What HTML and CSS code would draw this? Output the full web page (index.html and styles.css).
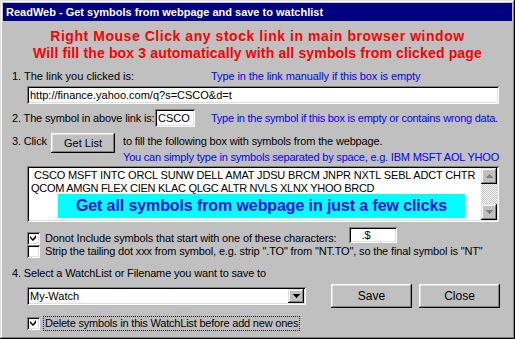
FILE: index.html
```html
<!DOCTYPE html>
<html>
<head>
<meta charset="utf-8">
<link rel="stylesheet" href="styles.css">
</head>
<body>
<div class="window">
  <div class="titlebar">ReadWeb - Get symbols from webpage and save to watchlist</div>
  <div class="content">
    <div class="header">
      <div class="h1">Right Mouse Click any stock link in main browser window</div>
      <div class="h2">Will fill the box 3 automatically with all symbols from clicked page</div>
    </div>

    <div class="row row1">
      <span class="lbl lbl1">1. The link you clicked is:</span>
      <span class="hint hint1">Type in the link manually if this box is empty</span>
    </div>
    <div class="field field-link">http://finance.yahoo.com/q?s=CSCO&amp;d=t</div>

    <div class="row row2">
      <span class="lbl lbl2">2. The symbol in above link is:</span>
      <span class="field field-sym">CSCO</span>
      <span class="hint">Type in the symbol if this box is empty or contains wrong data.</span>
    </div>

    <div class="row row3">
      <span class="lbl lbl3">3. Click</span>
      <span class="btn btn-get">Get List</span>
      <div class="row3-text">
        <div>to fill the following box with symbols from the webpage.</div>
        <div class="hint hint3">You can simply type in symbols separated by space, e.g. IBM MSFT AOL YHOO</div>
      </div>
    </div>

    <div class="memo">
      <div class="memo-text">
        <div class="line l1">&nbsp;CSCO MSFT INTC ORCL SUNW DELL AMAT JDSU BRCM JNPR NXTL SEBL ADCT CHTR</div>
        <div class="line l2">QCOM AMGN FLEX CIEN KLAC QLGC ALTR NVLS XLNX YHOO BRCD</div>
        <div class="banner">Get all symbols from webpage in just a few clicks</div>
      </div>
      <div class="scroll">
        <span class="sbtn"><svg width="7" height="4" viewBox="0 0 7 4"><path d="M3 0h1v1h1v1h1v1h1v1H0V3h1V2h1V1h1z" fill="#808080"/></svg></span>
        <span class="track"></span>
        <span class="sbtn"><svg width="7" height="4" viewBox="0 0 7 4"><path d="M0 0h7v1H6v1H5v1H4v1H3V3H2V2H1V1H0z" fill="#808080"/></svg></span>
      </div>
    </div>

    <div class="check check1">
      <span class="box"><svg width="7" height="7" viewBox="0 0 7 7"><path d="M6 0v3L3 6 0 3V1l3 3z" fill="#000"/></svg></span>
      <span class="clabel">Donot Include symbols that start with one of these characters:</span>
      <span class="field field-chars">.$</span>
    </div>
    <div class="check check2">
      <span class="box"></span>
      <span class="clabel">Strip the tailing dot xxx from symbol, e.g. strip ".TO" from "NT.TO", so the final symbol is "NT"</span>
    </div>

    <div class="row row4">4. Select a WatchList or Filename you want to save to</div>

    <div class="bottom">
      <div class="select">
        <span class="select-val">My-Watch</span>
        <span class="sbtn dd"><svg width="7" height="4" viewBox="0 0 7 4"><path d="M0 0h7v1H6v1H5v1H4v1H3V3H2V2H1V1H0z" fill="#000"/></svg></span>
      </div>
      <span class="btn btn-big">Save</span>
      <span class="btn btn-big">Close</span>
    </div>

    <div class="check check3">
      <span class="box"><svg width="7" height="7" viewBox="0 0 7 7"><path d="M6 0v3L3 6 0 3V1l3 3z" fill="#000"/></svg></span>
      <span class="clabel focus">Delete symbols in this WatchList before add new ones</span>
    </div>
  </div>
</div>
</body>
</html>
```
FILE: styles.css
```css
html, body {
  margin: 0;
  padding: 0;
  background: #c0c0c0;
}
body {
  font-family: "Liberation Sans", Arial, sans-serif;
  font-size: 11px;
  color: #000;
  letter-spacing: -0.15px;
}
.window {
  width: 515px;
  height: 339px;
  box-sizing: border-box;
  padding: 3px;
  background: #c0c0c0;
  box-shadow: inset -1px -1px #000, inset 1px 1px #dfdfdf, inset -2px -2px #808080, inset 2px 2px #fff;
  overflow: hidden;
}
.titlebar {
  height: 18px;
  line-height: 18px;
  background: #000080;
  color: #fff;
  font-weight: bold;
  font-size: 11px;
  letter-spacing: 0;
  padding-left: 3px;
  white-space: nowrap;
}
.content {
  padding-left: 9px;
}
.header {
  margin-top: 7px;
  color: #f00;
  font-weight: bold;
  font-size: 14px;
  line-height: 17px;
  text-align: center;
  padding-right: 9px;
  white-space: nowrap;
}
.h1 { letter-spacing: 0.55px; }
.h2 { letter-spacing: 0.15px; }
.row {
  display: flex;
  white-space: nowrap;
}
.hint {
  color: #00f;
  letter-spacing: -0.25px;
}
.hint1 { letter-spacing: -0.1px; }
.hint3 { letter-spacing: -0.2px; }
.lbl { flex: none; min-width: 0; }
.row1 {
  margin-top: 7px;
  height: 14px;
  line-height: 14px;
}
.lbl1 { width: 199px; letter-spacing: 0; }
.field {
  background: #fff;
  box-sizing: border-box;
  box-shadow: inset 1px 1px #808080, inset -1px -1px #fff, inset 2px 2px #000, inset -2px -2px #dfdfdf;
  white-space: nowrap;
}
.field-link {
  margin-top: 3px;
  margin-left: 15px;
  width: 472px;
  height: 18px;
  line-height: 18px;
  padding-left: 3px;
  letter-spacing: 0;
}
.row2 {
  margin-top: 5px;
  height: 18px;
  line-height: 18px;
}
.lbl2 { width: 143px; }
.field-sym {
  flex: none;
  width: 40px;
  height: 18px;
  padding-left: 3px;
  margin-right: 16px;
  letter-spacing: 0;
}
.row3 {
  margin-top: 6px;
  line-height: 16px;
}
.lbl3 { width: 39px; line-height: 16px; }
.btn {
  display: inline-flex;
  align-items: center;
  justify-content: center;
  box-sizing: border-box;
  background: #c0c0c0;
  letter-spacing: 0;
  box-shadow: inset -1px -1px #000, inset 1px 1px #fff, inset -2px -2px #808080, inset 2px 2px #dfdfdf;
}
.btn-get {
  flex: none;
  width: 64px;
  height: 20px;
  margin-right: 8px;
}
.memo {
  margin-top: 1px;
  margin-left: 15px;
  width: 472px;
  height: 56px;
  box-sizing: border-box;
  padding: 2px;
  background: #fff;
  box-shadow: inset 1px 1px #808080, inset -1px -1px #fff, inset 2px 2px #000, inset -2px -2px #dfdfdf;
  display: flex;
}
.memo-text {
  flex: 1;
  padding-top: 1px;
  white-space: nowrap;
}
.line {
  line-height: 13px;
  padding-left: 2px;
}
.l1 { letter-spacing: -0.15px; }
.l2 { letter-spacing: -0.28px; }
.banner {
  margin-top: -1px;
  margin-left: 29px;
  width: 407px;
  height: 24px;
  line-height: 24px;
  background: #0ff;
  color: #1010e0;
  font-weight: bold;
  font-size: 16px;
  letter-spacing: -0.1px;
  text-align: center;
}
.scroll {
  width: 16px;
  display: flex;
  flex-direction: column;
}
.sbtn {
  width: 16px;
  height: 16px;
  box-sizing: border-box;
  display: flex;
  align-items: center;
  justify-content: center;
  background: #c0c0c0;
  box-shadow: inset -1px -1px #000, inset 1px 1px #dfdfdf, inset -2px -2px #808080, inset 2px 2px #fff;
}
.track {
  flex: 1;
  background-color: #fff;
  background-image: repeating-conic-gradient(#c0c0c0 0 25%, #fff 0 50%);
  background-size: 2px 2px;
}
.check {
  display: flex;
  white-space: nowrap;
  margin-left: 15px;
}
.box {
  width: 13px;
  height: 13px;
  box-sizing: border-box;
  background: #fff;
  box-shadow: inset 1px 1px #808080, inset -1px -1px #fff, inset 2px 2px #000, inset -2px -2px #dfdfdf;
  display: inline-flex;
  align-items: center;
  justify-content: center;
  flex: none;
}
.clabel {
  margin-left: 5px;
  line-height: 13px;
}
.check1 {
  margin-top: 5px;
  height: 18px;
  align-items: flex-end;
}
.field-chars {
  margin-left: 12px;
  width: 48px;
  height: 16px;
  line-height: 16px;
  padding-left: 13px;
  margin-bottom: 2px;
  letter-spacing: 0;
}
.check2 {
  height: 13px;
}
.row4 {
  margin-top: 8px;
  height: 14px;
  line-height: 14px;
}
.bottom {
  margin-top: 4px;
  margin-left: 15px;
  display: flex;
  align-items: flex-start;
}
.select {
  margin-top: 3px;
  width: 279px;
  height: 18px;
  box-sizing: border-box;
  padding: 2px 2px 2px 3px;
  display: flex;
  background: #fff;
  letter-spacing: 0;
  box-shadow: inset 1px 1px #808080, inset -1px -1px #fff, inset 2px 2px #000, inset -2px -2px #dfdfdf;
}
.select-val {
  flex: 1;
  line-height: 14px;
}
.dd {
  width: 16px;
  height: 14px;
}
.btn-big {
  width: 81px;
  height: 24px;
  margin-left: 25px;
  font-size: 12px;
}
.btn-big + .btn-big {
  margin-left: 7px;
}
.check3 {
  margin-top: 9px;
  height: 13px;
}
.focus {
  outline: 1px dotted #000;
  outline-offset: 0;
  padding: 0 1px;
  margin-left: 4px;
  letter-spacing: -0.2px;
}
```
